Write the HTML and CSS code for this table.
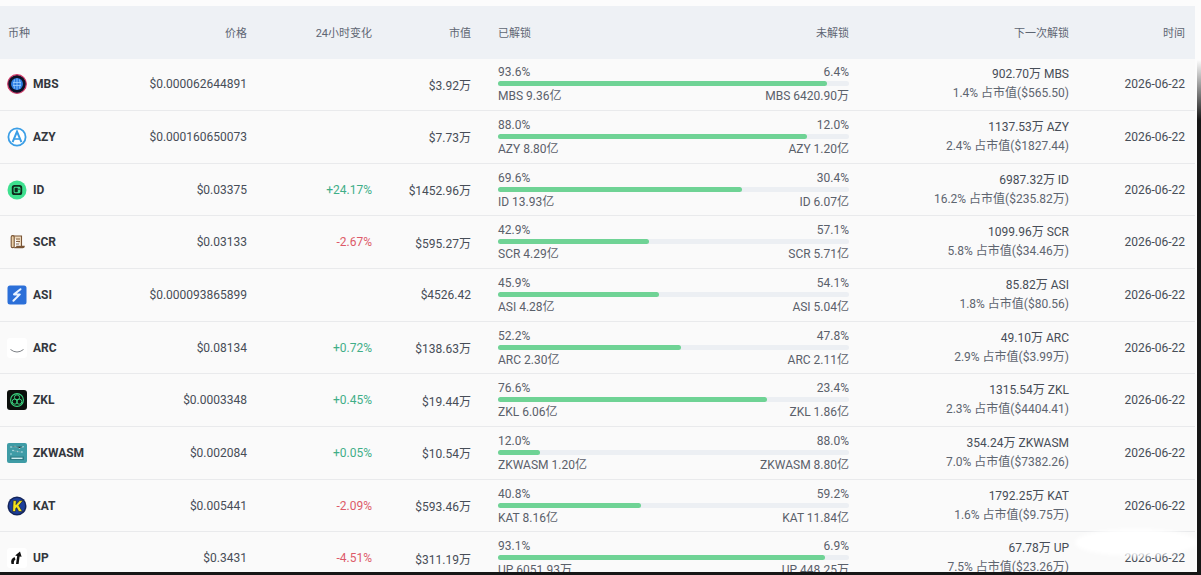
FILE: index.html
```html
<!DOCTYPE html>
<html lang="zh-CN">
<head>
<meta charset="utf-8">
<title>解锁</title>
<link rel="stylesheet" href="styles.css">
</head>
<body>
<div class="page">
  <div class="table">
    <div class="row head">
      <div class="c c1">币种</div>
      <div class="c c2">价格</div>
      <div class="c c3">24小时变化</div>
      <div class="c c4">市值</div>
      <div class="c c5 hsplit"><span>已解锁</span><span>未解锁</span></div>
      <div class="c c6">下一次解锁</div>
      <div class="c c7">时间</div>
    </div>

    <div class="row">
      <div class="c c1 coin">
        <svg class="ic" viewBox="0 0 20 20"><circle cx="10" cy="10" r="9.3" fill="#0d1226" stroke="#d23b6a" stroke-width="1.2"/><circle cx="10" cy="10" r="6" fill="#2a7be0"/><path d="M6 8.5h8M6 11.5h8M10 4.3v11.4M7.5 5.5q-1.5 4.5 0 9M12.5 5.5q1.5 4.5 0 9" stroke="#9fd0ff" stroke-width="0.8" fill="none"/></svg>
        <span class="nm">MBS</span></div>
      <div class="c c2">$0.000062644891</div>
      <div class="c c3"></div>
      <div class="c c4">$3.92万</div>
      <div class="c c5 unl"><div class="ln"><span>93.6%</span><span>6.4%</span></div><div class="track"><div class="fill" style="width:93.6%"></div></div><div class="ln"><span>MBS 9.36亿</span><span>MBS 6420.90万</span></div></div>
      <div class="c c6 nx"><span class="a">902.70万 MBS</span><span class="b">1.4% 占市值($565.50)</span></div>
      <div class="c c7">2026-06-22</div>
    </div>

    <div class="row">
      <div class="c c1 coin">
        <svg class="ic" viewBox="0 0 20 20"><circle cx="10" cy="10" r="8.6" fill="#fff" stroke="#3b9ee6" stroke-width="1.8"/><path d="M5.6 15.2L10 4.6l4.4 10.6" fill="none" stroke="#3b9ee6" stroke-width="2"/><path d="M7.2 12h5.6" stroke="#3b9ee6" stroke-width="1.6"/></svg>
        <span class="nm">AZY</span></div>
      <div class="c c2">$0.000160650073</div>
      <div class="c c3"></div>
      <div class="c c4">$7.73万</div>
      <div class="c c5 unl"><div class="ln"><span>88.0%</span><span>12.0%</span></div><div class="track"><div class="fill" style="width:88%"></div></div><div class="ln"><span>AZY 8.80亿</span><span>AZY 1.20亿</span></div></div>
      <div class="c c6 nx"><span class="a">1137.53万 AZY</span><span class="b">2.4% 占市值($1827.44)</span></div>
      <div class="c c7">2026-06-22</div>
    </div>

    <div class="row">
      <div class="c c1 coin">
        <svg class="ic" viewBox="0 0 20 20"><circle cx="10" cy="10" r="9.5" fill="#3ee08f"/><rect x="4.8" y="5" width="10.4" height="10" rx="2.6" fill="#0f2a1c"/><rect x="6.6" y="6.8" width="6.8" height="6.4" rx="1.4" fill="#3ee08f"/><rect x="7.6" y="7.8" width="3.2" height="4.4" rx="0.6" fill="#0f2a1c"/><circle cx="12" cy="9.2" r="0.7" fill="#0f2a1c"/></svg>
        <span class="nm">ID</span></div>
      <div class="c c2">$0.03375</div>
      <div class="c c3 up">+24.17%</div>
      <div class="c c4">$1452.96万</div>
      <div class="c c5 unl"><div class="ln"><span>69.6%</span><span>30.4%</span></div><div class="track"><div class="fill" style="width:69.6%"></div></div><div class="ln"><span>ID 13.93亿</span><span>ID 6.07亿</span></div></div>
      <div class="c c6 nx"><span class="a">6987.32万 ID</span><span class="b">16.2% 占市值($235.82万)</span></div>
      <div class="c c7">2026-06-22</div>
    </div>

    <div class="row">
      <div class="c c1 coin">
        <svg class="ic" viewBox="0 0 20 20"><path d="M6 4h8.5v10.5" fill="#f0dcc0" stroke="#7a5535" stroke-width="1.1"/><rect x="4.2" y="3.6" width="3" height="12" rx="1.4" fill="#e9cfa8" stroke="#7a5535" stroke-width="1.1"/><path d="M7.2 15.6h8.6q1.4 0 1.4-1.2h-8" fill="#e9cfa8" stroke="#7a5535" stroke-width="1.1"/><path d="M9 7h4M9 9.5h4M9 12h3" stroke="#7a5535" stroke-width="0.9"/></svg>
        <span class="nm">SCR</span></div>
      <div class="c c2">$0.03133</div>
      <div class="c c3 dn">-2.67%</div>
      <div class="c c4">$595.27万</div>
      <div class="c c5 unl"><div class="ln"><span>42.9%</span><span>57.1%</span></div><div class="track"><div class="fill" style="width:42.9%"></div></div><div class="ln"><span>SCR 4.29亿</span><span>SCR 5.71亿</span></div></div>
      <div class="c c6 nx"><span class="a">1099.96万 SCR</span><span class="b">5.8% 占市值($34.46万)</span></div>
      <div class="c c7">2026-06-22</div>
    </div>

    <div class="row">
      <div class="c c1 coin">
        <svg class="ic" viewBox="0 0 20 20"><rect x="0.5" y="0.5" width="19" height="19" rx="2.5" fill="#2b6fd8"/><path d="M13.5 4.2L7 9.4h5.8L6.4 15.8" fill="none" stroke="#e8f3ff" stroke-width="2" stroke-linejoin="round" stroke-linecap="round"/></svg>
        <span class="nm">ASI</span></div>
      <div class="c c2">$0.000093865899</div>
      <div class="c c3"></div>
      <div class="c c4">$4526.42</div>
      <div class="c c5 unl"><div class="ln"><span>45.9%</span><span>54.1%</span></div><div class="track"><div class="fill" style="width:45.9%"></div></div><div class="ln"><span>ASI 4.28亿</span><span>ASI 5.04亿</span></div></div>
      <div class="c c6 nx"><span class="a">85.82万 ASI</span><span class="b">1.8% 占市值($80.56)</span></div>
      <div class="c c7">2026-06-22</div>
    </div>

    <div class="row">
      <div class="c c1 coin">
        <svg class="ic" viewBox="0 0 20 20"><rect x="0" y="0" width="20" height="20" rx="3" fill="#ffffff"/><path d="M3.5 11.5q6.5 5 13 0" fill="none" stroke="#5a5f66" stroke-width="0.8"/></svg>
        <span class="nm">ARC</span></div>
      <div class="c c2">$0.08134</div>
      <div class="c c3 up">+0.72%</div>
      <div class="c c4">$138.63万</div>
      <div class="c c5 unl"><div class="ln"><span>52.2%</span><span>47.8%</span></div><div class="track"><div class="fill" style="width:52.2%"></div></div><div class="ln"><span>ARC 2.30亿</span><span>ARC 2.11亿</span></div></div>
      <div class="c c6 nx"><span class="a">49.10万 ARC</span><span class="b">2.9% 占市值($3.99万)</span></div>
      <div class="c c7">2026-06-22</div>
    </div>

    <div class="row">
      <div class="c c1 coin">
        <svg class="ic" viewBox="0 0 20 20"><rect x="0" y="0" width="20" height="20" rx="3" fill="#0b0f0c"/><circle cx="10" cy="10" r="6.4" fill="none" stroke="#3ad47f" stroke-width="1.1"/><circle cx="10" cy="7.4" r="2.6" fill="none" stroke="#3ad47f" stroke-width="1"/><circle cx="7.8" cy="11.6" r="2.6" fill="none" stroke="#3ad47f" stroke-width="1"/><circle cx="12.2" cy="11.6" r="2.6" fill="none" stroke="#3ad47f" stroke-width="1"/></svg>
        <span class="nm">ZKL</span></div>
      <div class="c c2">$0.0003348</div>
      <div class="c c3 up">+0.45%</div>
      <div class="c c4">$19.44万</div>
      <div class="c c5 unl"><div class="ln"><span>76.6%</span><span>23.4%</span></div><div class="track"><div class="fill" style="width:76.6%"></div></div><div class="ln"><span>ZKL 6.06亿</span><span>ZKL 1.86亿</span></div></div>
      <div class="c c6 nx"><span class="a">1315.54万 ZKL</span><span class="b">2.3% 占市值($4404.41)</span></div>
      <div class="c c7">2026-06-22</div>
    </div>

    <div class="row">
      <div class="c c1 coin">
        <svg class="ic" viewBox="0 0 20 20"><rect x="0" y="0" width="20" height="20" rx="2" fill="#3f9ca6"/><g fill="#d6f1f3"><circle cx="4" cy="4" r="0.7"/><circle cx="8" cy="3.5" r="0.7"/><circle cx="12.5" cy="5" r="0.7"/><circle cx="16" cy="3.8" r="0.7"/><circle cx="6" cy="7.5" r="0.7"/><circle cx="10.5" cy="8.5" r="0.7"/><circle cx="15" cy="9" r="0.7"/><circle cx="4" cy="11" r="0.7"/></g><path d="M4 4L8 3.5 12.5 5 16 3.8M6 7.5L10.5 8.5 15 9" stroke="#bfe6ea" stroke-width="0.4"/><rect x="3" y="13.5" width="14" height="3.6" fill="#2f7d86"/><rect x="4.5" y="14.6" width="11" height="1.4" fill="#cfeef1"/></svg>
        <span class="nm">ZKWASM</span></div>
      <div class="c c2">$0.002084</div>
      <div class="c c3 up">+0.05%</div>
      <div class="c c4">$10.54万</div>
      <div class="c c5 unl"><div class="ln"><span>12.0%</span><span>88.0%</span></div><div class="track"><div class="fill" style="width:12%"></div></div><div class="ln"><span>ZKWASM 1.20亿</span><span>ZKWASM 8.80亿</span></div></div>
      <div class="c c6 nx"><span class="a">354.24万 ZKWASM</span><span class="b">7.0% 占市值($7382.26)</span></div>
      <div class="c c7">2026-06-22</div>
    </div>

    <div class="row">
      <div class="c c1 coin">
        <svg class="ic" viewBox="0 0 20 20"><circle cx="10" cy="10" r="9.5" fill="#13245a"/><circle cx="10" cy="10" r="8" fill="#1d3f9a"/><path d="M6.2 4.6h3.2l-0.4 4 3.6-4h3.4l-4.2 5 3.6 6h-3.6l-2.2-4-0.8 1-0.3 3H5.6z" fill="#f3e21b" stroke="#0b1533" stroke-width="0.6"/></svg>
        <span class="nm">KAT</span></div>
      <div class="c c2">$0.005441</div>
      <div class="c c3 dn">-2.09%</div>
      <div class="c c4">$593.46万</div>
      <div class="c c5 unl"><div class="ln"><span>40.8%</span><span>59.2%</span></div><div class="track"><div class="fill" style="width:40.8%"></div></div><div class="ln"><span>KAT 8.16亿</span><span>KAT 11.84亿</span></div></div>
      <div class="c c6 nx"><span class="a">1792.25万 KAT</span><span class="b">1.6% 占市值($9.75万)</span></div>
      <div class="c c7">2026-06-22</div>
    </div>

    <div class="row">
      <div class="c c1 coin">
        <svg class="ic" viewBox="0 0 20 20"><rect x="0" y="0" width="20" height="20" rx="3" fill="#ffffff"/><path d="M4.5 16q-1.5-5 3-7l1 2.4q-2 1-1.6 4.6z" fill="#111"/><path d="M9 16l1.2-8-2-0.4 4.8-4 1.6 5.2-2-0.3-1 7.5z" fill="#111"/></svg>
        <span class="nm">UP</span></div>
      <div class="c c2">$0.3431</div>
      <div class="c c3 dn">-4.51%</div>
      <div class="c c4">$311.19万</div>
      <div class="c c5 unl"><div class="ln"><span>93.1%</span><span>6.9%</span></div><div class="track"><div class="fill" style="width:93.1%"></div></div><div class="ln"><span>UP 6051.93万</span><span>UP 448.25万</span></div></div>
      <div class="c c6 nx"><span class="a">67.78万 UP</span><span class="b">7.5% 占市值($23.26万)</span></div>
      <div class="c c7">2026-06-22</div>
    </div>
  </div>
  <div class="blot"></div>
  <div class="edge-r"></div>
  <div class="edge-b"></div>
</div>
</body>
</html>
```

FILE: styles.css
```css
html, body {
  margin: 0;
  padding: 0;
  background: #ffffff;
}
body {
  font-family: Roboto, "Noto Sans CJK SC", sans-serif;
  font-size: 12px;
  color: #474d57;
}
.page {
  position: relative;
  width: 1201px;
  height: 575px;
  overflow: hidden;
  padding-top: 6px;
  box-sizing: border-box;
  background: #fcfcfc;
}
.table {
  width: 1195px;
}
.row {
  display: grid;
  grid-template-columns: 122px 117px 125px 99px 378px 220px 116px;
  padding: 0 10px 0 8px;
  height: 52.67px;
  box-sizing: border-box;
  background: #fafafa;
  border-bottom: 1px solid #e9eaec;
  align-items: center;
}
.row.head {
  height: 52.5px;
  background: #eef1f5;
  border-bottom: none;
  font-size: 11px;
  color: #5e6673;
}
.c {
  text-align: right;
  white-space: nowrap;
}
.c1 {
  text-align: left;
}
.c5 {
  padding-left: 27px;
  text-align: left;
}
.hsplit {
  display: flex;
  justify-content: space-between;
}
.coin {
  display: flex;
  align-items: center;
  gap: 6px;
  margin-left: -1px;
}
.ic {
  width: 20px;
  height: 20px;
  flex: none;
}
.nm {
  font-weight: 700;
  color: #33373d;
  font-size: 12px;
}
.up {
  color: #3fae88;
}
.dn {
  color: #dd5a69;
}
.unl {
  display: flex;
  flex-direction: column;
}
.ln {
  display: flex;
  justify-content: space-between;
  line-height: 14px;
  color: #5a606a;
}
.track {
  height: 5px;
  margin: 2px 0 3px;
  border-radius: 3px;
  background: #eceff3;
}
.fill {
  height: 100%;
  border-radius: 3px;
  background: #6fd395;
}
.nx {
  display: flex;
  flex-direction: column;
  align-items: flex-end;
  line-height: 19px;
}
.nx .b {
  color: #5e6570;
}
.blot {
  position: absolute;
  left: 1075px;
  top: 529px;
  width: 122px;
  height: 27px;
  border-radius: 50%;
  background: #ffffff;
  filter: blur(2px);
}
.edge-r {
  position: absolute;
  right: 0;
  top: 60px;
  bottom: 0;
  width: 4px;
  background: linear-gradient(to bottom, rgba(20,20,20,0), #161616 60px);
}
.edge-b {
  position: absolute;
  left: 0;
  right: 0;
  bottom: 0;
  height: 3px;
  background: #161616;
}
```
